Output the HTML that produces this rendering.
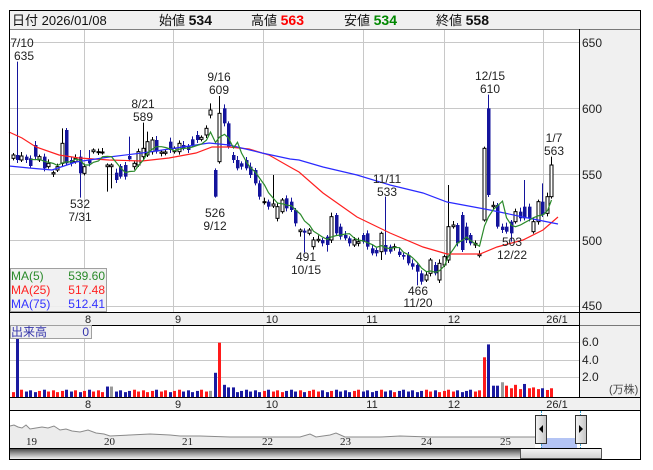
<!DOCTYPE html>
<html><head><meta charset="utf-8"><style>
html,body{margin:0;padding:0;background:#fff;}
svg{display:block;font-family:"Liberation Sans","Noto Sans CJK JP",sans-serif;}
</style></head><body>
<svg id="s" width="653" height="470" viewBox="0 0 653 470" xmlns="http://www.w3.org/2000/svg">
<defs>
<linearGradient id="sb" x1="0" y1="0" x2="0" y2="1"><stop offset="0" stop-color="#3a3a3a"/><stop offset="0.5" stop-color="#9a9a9a"/><stop offset="1" stop-color="#f2f2f2"/></linearGradient>
<linearGradient id="th" x1="0" y1="0" x2="0" y2="1"><stop offset="0" stop-color="#f4f4f4"/><stop offset="1" stop-color="#d0d0d0"/></linearGradient>
<linearGradient id="hd" x1="0" y1="0" x2="1" y2="0"><stop offset="0" stop-color="#f4f4f4"/><stop offset="1" stop-color="#c4c4c4"/></linearGradient>
</defs>
<!-- header -->
<rect x="9.5" y="10.5" width="631" height="19" fill="#f0f0f0" stroke="#000"/>
<text x="12" y="25" font-size="13" fill="#111">日付 2026/01/08</text>
<text x="159" y="25" font-size="13" fill="#111">始値 <tspan font-weight="bold" font-size="14">534</tspan></text>
<text x="251" y="25" font-size="13" fill="#111">高値 <tspan font-weight="bold" font-size="14" fill="#f00">563</tspan></text>
<text x="344" y="25" font-size="13" fill="#111">安値 <tspan font-weight="bold" font-size="14" fill="#080">534</tspan></text>
<text x="436" y="25" font-size="13" fill="#111">終値 <tspan font-weight="bold" font-size="14">558</tspan></text>
<!-- price panel -->
<rect x="9.5" y="29.5" width="570" height="283" fill="#fff"/>
<rect x="579.5" y="29.5" width="61" height="283" fill="#f0f0f0"/>
<g stroke="#c8c8c8" stroke-width="1">
<line x1="10" y1="42.5" x2="579" y2="42.5"/><line x1="10" y1="108.5" x2="579" y2="108.5"/><line x1="10" y1="174.5" x2="579" y2="174.5"/><line x1="10" y1="240.5" x2="579" y2="240.5"/><line x1="10" y1="306.5" x2="579" y2="306.5"/>
<line x1="84.5" y1="30" x2="84.5" y2="312"/><line x1="173.5" y1="30" x2="173.5" y2="312"/><line x1="263.5" y1="30" x2="263.5" y2="312"/><line x1="363.5" y1="30" x2="363.5" y2="312"/><line x1="444.5" y1="30" x2="444.5" y2="312"/><line x1="543.5" y1="30" x2="543.5" y2="312"/>
</g>
<g font-size="12" fill="#222">
<text x="582" y="47">650</text><text x="582" y="113">600</text><text x="582" y="179">550</text><text x="582" y="245">500</text><text x="582" y="310">450</text>
</g>
<g id="cand"></g>
<polyline fill="none" stroke="#ff2020" stroke-width="1.2" points="9,132 22,138 36,147 59,155 79,158 109,160 142,161 169,158 196,153 212,147 229,147 249,149 269,155 290,167 299,172 323,193 357,217 390,233 423,247 447,254 480,254 497,247 523,240 543,230 558,217"/>
<polyline fill="none" stroke="#2a2aff" stroke-width="1.2" points="9,166 29,168 52,170 76,162 109,157 142,153 176,148 209,143 229,145 262,153 290,159 299,160 323,167 357,175 390,185 423,193 447,202 490,210 523,217 558,224"/>
<polyline id="ma5" fill="none" stroke="#2a8a2a" stroke-width="1.2" points=""/>
<g font-size="12" fill="#222" text-anchor="middle">
<text x="22" y="47">7/10</text><text x="24" y="60">635</text>
<text x="143" y="108">8/21</text><text x="143" y="121">589</text>
<text x="219" y="81">9/16</text><text x="219" y="94">609</text>
<text x="80" y="208">532</text><text x="80" y="221">7/31</text>
<text x="215" y="217">526</text><text x="215" y="230">9/12</text>
<text x="306" y="261">491</text><text x="306" y="274">10/15</text>
<text x="387" y="183">11/11</text><text x="387" y="196">533</text>
<text x="418" y="295">466</text><text x="418" y="307">11/20</text>
<text x="490" y="80">12/15</text><text x="490" y="93">610</text>
<text x="554" y="142">1/7</text><text x="554" y="155">563</text>
<text x="512" y="246">503</text><text x="512" y="259">12/22</text>
</g>
<rect x="10.5" y="268.5" width="96" height="43" fill="#f0f0f0" fill-opacity="0.9" stroke="#a0a0a0"/>
<g font-size="12">
<text x="11" y="280" fill="#2a8a2a">MA(5)</text><text x="105" y="280" fill="#2a8a2a" text-anchor="end">539.60</text>
<text x="11" y="294" fill="#ff2020">MA(25)</text><text x="105" y="294" fill="#ff2020" text-anchor="end">517.48</text>
<text x="11" y="308" fill="#3333ff">MA(75)</text><text x="105" y="308" fill="#3333ff" text-anchor="end">512.41</text>
</g>
<!-- date strip 1 -->
<rect x="9.5" y="312.5" width="631" height="13" fill="#f0f0f0" stroke="#000"/>
<g font-size="11" fill="#222" text-anchor="middle">
<text x="88" y="323">8</text><text x="178" y="323">9</text><text x="272" y="323">10</text><text x="372" y="323">11</text><text x="454" y="323">12</text><text x="557" y="323">26/1</text>
</g>
<!-- volume panel -->
<rect x="579.5" y="325.5" width="61" height="72" fill="#f0f0f0"/>
<g stroke="#c8c8c8">
<line x1="10" y1="342.5" x2="579" y2="342.5"/><line x1="10" y1="360.5" x2="579" y2="360.5"/><line x1="10" y1="377.5" x2="579" y2="377.5"/>
<line x1="84.5" y1="326" x2="84.5" y2="397"/><line x1="173.5" y1="326" x2="173.5" y2="397"/><line x1="263.5" y1="326" x2="263.5" y2="397"/><line x1="363.5" y1="326" x2="363.5" y2="397"/><line x1="444.5" y1="326" x2="444.5" y2="397"/><line x1="543.5" y1="326" x2="543.5" y2="397"/>
</g>
<g id="vol"></g>
<line x1="579.5" y1="29" x2="579.5" y2="410" stroke="#000"/>
<g font-size="12" fill="#222">
<text x="582" y="346">6.0</text><text x="582" y="364">4.0</text><text x="582" y="381">2.0</text>
<text x="609" y="393" font-size="11" fill="#444">(万株)</text>
</g>
<rect x="10.5" y="325.5" width="81" height="13" fill="#f0f0f0" stroke="#a0a0a0"/>
<text x="11" y="336" font-size="12" fill="#3333aa">出来高</text><text x="89" y="336" font-size="12" fill="#3333aa" text-anchor="end">0</text>
<!-- date strip 2 -->
<rect x="9.5" y="397.5" width="631" height="13" fill="#f0f0f0" stroke="#000"/>
<g font-size="11" fill="#222" text-anchor="middle">
<text x="88" y="408">8</text><text x="178" y="408">9</text><text x="272" y="408">10</text><text x="372" y="408">11</text><text x="454" y="408">12</text><text x="557" y="408">26/1</text>
</g>
<!-- navigator -->
<rect x="9.5" y="410.5" width="631" height="49" fill="#fff" stroke="#000"/>
<polygon fill="#ececec" points="10,426 14,425 18,427 22,428 26,425 30,429 36,428 42,427 48,428 54,426 60,430 66,429 72,431 80,432 88,430 96,433 104,434 110,436 130,435 150,434 170,435 180,436 200,436 230,437 260,437 300,437 310,434 316,437 330,435 336,433 345,437 380,437 400,436 430,437 470,437 500,437 535,437 535,448 10,448"/>
<polyline fill="none" stroke="#8a8a8a" points="10,426 14,425 18,427 22,428 26,425 30,429 36,428 42,427 48,428 54,426 60,430 66,429 72,431 80,432 88,430 96,433 104,434 110,436 130,435 150,434 170,435 180,436 200,436 230,437 260,437 300,437 310,434 316,437 330,435 336,433 345,437 380,437 400,436 430,437 470,437 500,437 535,437"/>
<g font-size="11" fill="#222" font-family="Liberation Serif,serif">
<text x="26" y="445">19</text><text x="104" y="445">20</text><text x="182" y="445">21</text><text x="262" y="445">22</text><text x="340" y="445">23</text><text x="421" y="445">24</text><text x="500" y="445">25</text>
</g>
<rect x="541" y="438" width="36" height="10" fill="#b4c4f4"/>
<line x1="541.5" y1="411" x2="541.5" y2="448" stroke="#3aa0d0" stroke-dasharray="2,1"/>
<line x1="580.5" y1="411" x2="580.5" y2="459" stroke="#3aa0d0" stroke-dasharray="2,1"/>
<rect x="535.5" y="415.5" width="11" height="28" fill="url(#hd)" stroke="#333"/>
<polygon points="543,425 543,433 539,429" fill="#000"/>
<rect x="575.5" y="415.5" width="11" height="28" fill="url(#hd)" stroke="#333"/>
<polygon points="579,425 579,433 583,429" fill="#000"/>
<rect x="10" y="448" width="591" height="11" fill="url(#sb)"/>
<rect x="520.5" y="448.5" width="81" height="10" fill="url(#th)" stroke="#555"/>
<line x1="10" y1="448.5" x2="601" y2="448.5" stroke="#000"/>
<rect x="9.5" y="10.5" width="631" height="449" fill="none" stroke="#000"/>
</svg>
<script>
var D=[
[285,295,'w'],[285,300,'b',5],[288,300,'w'],[290,300,'b'],[295,318,'b'],[255,290,'b'],[290,300,'w'],[290,325,'b'],[310,320,'w'],[338,342,'w'],
[320,330,'w'],[250,310,'w',205],[210,310,'b'],[300,310,'b'],[295,305,'w'],[290,340,'b',270,413],[320,340,'w'],[298,310,'b',270],[270,275,'w',265],[275,276,'w'],
[276,278,'w'],[315,320,'w',310,395],[315,320,'w',310,385],[338,360,'b'],[318,350,'b'],[315,350,'b'],[288,298,'b',230],[310,320,'w'],[275,315,'w'],[265,290,'w',188],
[245,285,'w',215],[240,275,'w'],[240,275,'b'],[276,280,'w'],[276,280,'w'],[245,270,'b'],[265,275,'w'],[250,275,'w'],[255,265,'b'],[258,270,'b'],
[238,255,'b'],[225,240,'b'],[232,238,'w'],[205,225,'w'],[150,165,'w',130,175],[330,410,'b',325,413],[160,305,'w',108],[145,190,'b'],[190,260,'b'],[285,300,'b'],
[300,325,'b'],[310,320,'b'],[300,325,'b'],[320,345,'b'],[330,370,'b'],[370,410,'b'],[425,428,'w'],[425,440,'b'],[432,438,'w',345],[440,475,'w'],
[420,455,'w'],[415,445,'b'],[425,450,'b'],[450,490,'b'],[510,515,'w',505,530],[512,518,'b',505,578],[510,520,'w'],[540,560,'w'],[538,542,'w'],[540,550,'b'],
[530,555,'b',525,575],[470,540,'w'],[465,520,'b'],[500,530,'b'],[525,535,'b'],[535,550,'b'],[540,555,'w'],[545,550,'w'],[525,545,'b'],[520,560,'b'],
[565,580,'b'],[570,580,'b'],[520,575,'w',515,600],[555,575,'b',410],[560,575,'b'],[560,563,'w'],[575,585,'b'],[585,590,'b'],[585,610,'b'],[610,620,'b'],
[615,635,'b',610,676],[640,665,'b'],[645,660,'w'],[600,640,'w'],[615,640,'b'],[610,660,'w'],[590,615,'w'],[500,600,'w',375],[495,500,'w'],[495,550,'b'],
[465,570,'b'],[500,540,'b'],[525,550,'b'],[550,555,'w'],[583,587,'w'],[265,480,'w',260,485],[145,405,'b',104],[436,440,'w'],[435,500,'b'],[500,510,'b'],
[500,515,'b'],[485,520,'b',480,545],[455,485,'w'],[455,475,'b'],[440,475,'b',360],[440,475,'b'],[485,515,'w'],[425,485,'w'],[425,465,'b',370],[410,460,'w'],
[315,410,'w',290]];
var V={1:[6.8,'b'],21:[1.1,'b'],22:[1.1,'g'],44:[0.6,'g'],45:[2.7,'b'],46:[6.2,'r'],47:[1.3,'b'],48:[1.0,'b'],49:[1.0,'b'],
105:[4.5,'r'],106:[6.0,'b'],107:[1.2,'b'],108:[1.2,'b'],109:[1.6,'g'],110:[1.2,'r'],111:[0.9,'r'],112:[1.3,'r'],113:[0.8,'r'],114:[1.4,'b'],115:[0.9,'r'],116:[1.0,'r'],117:[0.8,'r'],118:[0.9,'b'],119:[0.7,'r'],120:[0.9,'r']};
var ns="http://www.w3.org/2000/svg",c=document.getElementById('cand'),vg=document.getElementById('vol');
function el(p,t,a){var e=document.createElementNS(ns,t);for(var k in a)e.setAttribute(k,a[k]);p.appendChild(e);return e;}
function Y(z){return 60+z/3;}
var closes=[],pts=[];
for(var i=0;i<D.length;i++){
 var d=D[i],x=Math.round(12.5+i*4.49)+0.5,t=Y(d[0]),b=Y(d[1]);
 var hi=d[3]!==undefined?Y(d[3]):t-2-(i%3),lo=d[4]!==undefined?Y(d[4]):b+2+(i%2);
 var col=d[2]=='b'?'#14149c':'#000';
 el(c,'line',{x1:x,y1:hi,x2:x,y2:lo,stroke:col,'stroke-width':1});
 if(d[2]=='b')el(c,'rect',{x:x-1.5,y:t,width:3.5,height:Math.max(1,b-t),fill:'#14149c'});
 else el(c,'rect',{x:x-1.5,y:t,width:3,height:Math.max(1,b-t),fill:'#fff',stroke:'#000','stroke-width':1});
 closes.push(d[2]=='b'?b:t);
 if(i>=4){var s=0;for(var j=i-4;j<=i;j++)s+=closes[j];pts.push(x+','+(s/5).toFixed(1));}
 var v=V[i]?V[i][0]:0.45+((i*37)%5)*0.07,k=V[i]?V[i][1]:(d[2]=='b'?'b':'r');
 var h=v*8.6;var fc=k=='b'?'#1a1aa0':(k=='r'?'#ff1a1a':'#999');
 el(vg,'rect',{x:x-1.5,y:396-h,width:3,height:h+1,fill:fc});
}
document.getElementById('ma5').setAttribute('points',pts.join(' '));
</script>
</body></html>
